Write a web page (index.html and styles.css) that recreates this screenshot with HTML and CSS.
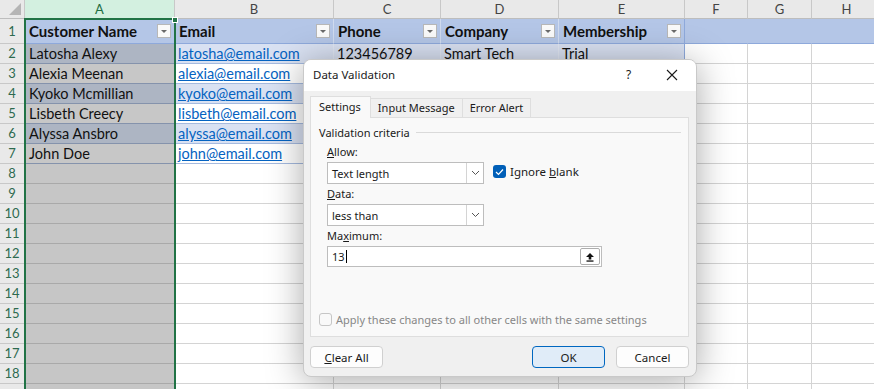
FILE: index.html
```html
<!DOCTYPE html>
<html lang="en">
<head>
  <meta charset="UTF-8" />
  <title>Data Validation</title>
  <link rel="stylesheet" href="styles.css">
</head>
<body>

  <div class="sheet">
    <div class="row colhead">
      <div class="corner"><svg width="14" height="14" viewBox="0 0 14 14"><polygon points="13,1 13,13 1,13" fill="#b5b5b5"/></svg></div>
      <div class="ch on">A</div><div class="ch">B</div><div class="ch">C</div><div class="ch">D</div>
      <div class="ch">E</div><div class="ch">F</div><div class="ch">G</div><div class="ch">H</div>
    </div>

    <div class="row r1">
      <div class="rh">1</div>
      <div class="th">Customer Name<span class="dd"></span></div>
      <div class="th">Email<span class="dd"></span></div>
      <div class="th">Phone<span class="dd"></span></div>
      <div class="th">Company<span class="dd"></span></div>
      <div class="th last">Membership<span class="dd"></span></div>
      <div class="hx"></div><div class="hx"></div><div class="hx"></div>
    </div>

    <div class="row tr band">
      <div class="rh">2</div>
      <div class="sel">Latosha Alexy</div><div><a>latosha@email.com</a></div>
      <div>123456789</div><div>Smart Tech</div><div class="last">Trial</div>
      <div class="g"></div><div class="g"></div><div class="g"></div>
    </div>
    <div class="row tr">
      <div class="rh">3</div>
      <div class="sel">Alexia Meenan</div><div><a>alexia@email.com</a></div>
      <div></div><div></div><div class="last"></div>
      <div class="g"></div><div class="g"></div><div class="g"></div>
    </div>
    <div class="row tr band">
      <div class="rh">4</div>
      <div class="sel">Kyoko Mcmillian</div><div><a>kyoko@email.com</a></div>
      <div></div><div></div><div class="last"></div>
      <div class="g"></div><div class="g"></div><div class="g"></div>
    </div>
    <div class="row tr">
      <div class="rh">5</div>
      <div class="sel">Lisbeth Creecy</div><div><a>lisbeth@email.com</a></div>
      <div></div><div></div><div class="last"></div>
      <div class="g"></div><div class="g"></div><div class="g"></div>
    </div>
    <div class="row tr band">
      <div class="rh">6</div>
      <div class="sel">Alyssa Ansbro</div><div><a>alyssa@email.com</a></div>
      <div></div><div></div><div class="last"></div>
      <div class="g"></div><div class="g"></div><div class="g"></div>
    </div>
    <div class="row tr">
      <div class="rh">7</div>
      <div class="sel">John Doe</div><div><a>john@email.com</a></div>
      <div></div><div></div><div class="last"></div>
      <div class="g"></div><div class="g"></div><div class="g"></div>
    </div>

    <div class="row"><div class="rh">8</div><div class="sel"></div><div></div><div></div><div></div><div></div><div></div><div></div><div></div></div>
    <div class="row"><div class="rh">9</div><div class="sel"></div><div></div><div></div><div></div><div></div><div></div><div></div><div></div></div>
    <div class="row"><div class="rh">10</div><div class="sel"></div><div></div><div></div><div></div><div></div><div></div><div></div><div></div></div>
    <div class="row"><div class="rh">11</div><div class="sel"></div><div></div><div></div><div></div><div></div><div></div><div></div><div></div></div>
    <div class="row"><div class="rh">12</div><div class="sel"></div><div></div><div></div><div></div><div></div><div></div><div></div><div></div></div>
    <div class="row"><div class="rh">13</div><div class="sel"></div><div></div><div></div><div></div><div></div><div></div><div></div><div></div></div>
    <div class="row"><div class="rh">14</div><div class="sel"></div><div></div><div></div><div></div><div></div><div></div><div></div><div></div></div>
    <div class="row"><div class="rh">15</div><div class="sel"></div><div></div><div></div><div></div><div></div><div></div><div></div><div></div></div>
    <div class="row"><div class="rh">16</div><div class="sel"></div><div></div><div></div><div></div><div></div><div></div><div></div><div></div></div>
    <div class="row"><div class="rh">17</div><div class="sel"></div><div></div><div></div><div></div><div></div><div></div><div></div><div></div></div>
    <div class="row"><div class="rh">18</div><div class="sel"></div><div></div><div></div><div></div><div></div><div></div><div></div><div></div></div>
    <div class="row"><div class="rh"></div><div class="sel"></div><div></div><div></div><div></div><div></div><div></div><div></div><div></div></div>

    <div class="selection"><span class="handle"></span></div>
  </div>

  <div class="dialog">
    <div class="titlebar">
      <span class="title">Data Validation</span>
      <span class="help">?</span>
      <span class="close"><svg width="12" height="12" viewBox="0 0 12 12"><path d="M1 1 L11 11 M11 1 L1 11" stroke="#1a1a1a" stroke-width="1.1"/></svg></span>
    </div>

    <div class="dbody">
      <div class="tabs">
        <div class="tab on">Settings</div>
        <div class="tab">Input Message</div>
        <div class="tab">Error Alert</div>
      </div>

      <div class="panel">
        <div class="group"><span>Validation criteria</span><span class="rule"></span></div>

        <div class="fields">
          <div class="label"><u>A</u>llow:</div>
          <div class="line">
            <div class="combo">
              <span class="val">Text length</span>
              <span class="arrow"><svg width="9" height="6" viewBox="0 0 9 6"><path d="M1 1 L4.5 4.5 L8 1" fill="none" stroke="#555" stroke-width="1"/></svg></span>
            </div>
            <div class="check">
              <span class="box on"><svg width="9" height="8" viewBox="0 0 9 8"><path d="M1 4 L3.5 6.5 L8 1.5" fill="none" stroke="#fff" stroke-width="1.2"/></svg></span>
              <span>Ignore <u>b</u>lank</span>
            </div>
          </div>

          <div class="label"><u>D</u>ata:</div>
          <div class="combo">
            <span class="val">less than</span>
            <span class="arrow"><svg width="9" height="6" viewBox="0 0 9 6"><path d="M1 1 L4.5 4.5 L8 1" fill="none" stroke="#555" stroke-width="1"/></svg></span>
          </div>

          <div class="label">Ma<u>x</u>imum:</div>
          <div class="input">
            <span class="val">13<span class="caret"></span></span>
            <span class="pick"><svg width="10" height="10" viewBox="0 0 10 10"><path d="M5 1 L9 5 L6.3 5 L6.3 7.5 L3.7 7.5 L3.7 5 L1 5 Z" fill="#111"/><rect x="1.5" y="8.4" width="7" height="1.3" fill="#111"/></svg></span>
          </div>
        </div>

        <div class="apply"><span class="box off"></span><span>Apply these changes to all other cells with the same settings</span></div>
      </div>

      <div class="buttons">
        <button><u>C</u>lear All</button>
        <span class="spacer"></span>
        <button class="primary">OK</button>
        <button>Cancel</button>
      </div>
    </div>
  </div>

</body>
</html>
```

FILE: styles.css
```css
* {
  box-sizing: border-box;
}

body {
  margin: 0;
  width: 874px;
  height: 389px;
  overflow: hidden;
  background: #fff;
  font-family: Lato, "Liberation Sans", sans-serif;
  color: #111;
}

.sheet {
  position: relative;
  height: 389px;
  overflow: hidden;
}

.row {
  display: grid;
  grid-template-columns: 25px 150px 159px 107px 118px 126px 63px 64px 70px;
  height: 20px;
}

.row > div {
  border-right: 1px solid #d4d4d4;
  border-bottom: 1px solid #d4d4d4;
  font-size: 14.5px;
  line-height: 19px;
  padding: 0 3px;
  white-space: nowrap;
  overflow: hidden;
}

/* column letters */
.colhead {
  height: 19px;
}

.colhead > div {
  background: #e9e9e9;
  border-right-color: #c8c8c8;
  border-bottom-color: #bdbdbd;
  text-align: center;
  font-size: 13px;
  line-height: 18px;
  color: #444;
}

.colhead .corner {
  padding: 2px 0 0 8px;
  text-align: left;
}

.colhead .ch.on {
  background: #d3f0e0;
  color: #1d6d42;
}

/* row numbers */
.row > .rh {
  background: #e9e9e9;
  border-right-color: #bdbdbd;
  border-bottom-color: #c8c8c8;
  color: #2d6a4f;
  font-size: 13px;
  text-align: center;
  padding: 0;
}

/* table header row */
.r1 {
  height: 25px;
}

.r1 > div {
  line-height: 24px;
}

.r1 > .th {
  display: flex;
  align-items: center;
  justify-content: space-between;
  background: #b4c6e7;
  border-right-color: #d0dbef;
  border-bottom-color: #8ea9db;
  font-weight: bold;
  font-size: 15px;
  padding: 0 3px 0 4px;
}

.r1 > .th.last {
  border-right-color: #8ea9db;
}

.r1 > .hx {
  background: #b4c6e7;
  border-right-color: #b4c6e7;
  border-bottom-color: #8ea9db;
}

.dd {
  width: 14px;
  height: 14px;
  background: #fafafa;
  border: 1px solid #b8b8b8;
  position: relative;
}

.dd::after {
  content: "";
  position: absolute;
  left: 3px;
  top: 5px;
  border-left: 3.5px solid transparent;
  border-right: 3.5px solid transparent;
  border-top: 3.5px solid #6a6a6a;
}

/* table body */
.tr > div {
  border-bottom-color: #a5badf;
  border-right-color: #e2e8f4;
}

.tr > div.last {
  border-right-color: #8ea9db;
}

.tr.band > div {
  background: #d9e1f2;
}

.tr > div.g {
  background: #fff;
  border-right-color: #d4d4d4;
  border-bottom-color: #d4d4d4;
}

.tr > .rh,
.tr.band > .rh {
  background: #e9e9e9;
  border-right-color: #bdbdbd;
  border-bottom-color: #c8c8c8;
}

.row > .sel {
  background: #c6c6c6;
  border-bottom-color: #a9a9a9;
  padding-left: 4px;
}

.tr > .sel {
  background: #c7c7c7;
  border-bottom-color: #8593ac;
}

.tr.band > .sel {
  background: #adb5c3;
}

a {
  color: #0563c1;
  text-decoration: underline;
}

.selection {
  position: absolute;
  left: 24px;
  top: 18px;
  width: 152px;
  height: 380px;
  border: 2px solid #217346;
}

.handle {
  position: absolute;
  right: -4px;
  top: -3px;
  width: 6px;
  height: 6px;
  background: #217346;
  border: 1px solid #fff;
}

/* dialog */
.dialog {
  position: absolute;
  left: 303px;
  top: 59px;
  width: 394px;
  height: 318px;
  background: #f0f0f0;
  border: 1px solid #c9c9c9;
  border-radius: 8px;
  box-shadow: 0 4px 36px rgba(0, 0, 0, 0.34);
  font-family: "Noto Sans", "Open Sans", sans-serif;
  font-size: 11px;
  color: #1a1a1a;
  display: flex;
  flex-direction: column;
  overflow: hidden;
}

.titlebar {
  display: flex;
  align-items: center;
  height: 31px;
  background: #fff;
  padding: 0 0 0 9px;
}

.title {
  flex: 1;
  font-size: 11.5px;
  padding-bottom: 2px;
}

.help {
  width: 14px;
  margin-right: 26px;
  font-size: 12px;
  padding-bottom: 2px;
}

.close {
  width: 30px;
  padding-top: 1px;
}

.dbody {
  flex: 1;
  display: flex;
  flex-direction: column;
  padding: 5px 7px 0 6px;
}

.tabs {
  display: flex;
  align-items: flex-end;
  height: 21px;
  position: relative;
  z-index: 1;
}

.tab {
  height: 19px;
  line-height: 17px;
  padding: 0 7px;
  border: 1px solid #dedede;
  border-bottom: none;
  border-left: none;
  background: #f0f0f0;
}

.tab.on {
  height: 22px;
  margin-bottom: -1px;
  line-height: 19px;
  border-left: 1px solid #dedede;
  background: #f9f9f9;
  padding: 0 9px 0 8px;
}

.panel {
  height: 220px;
  background: #f9f9f9;
  border: 1px solid #dedede;
  padding: 6px 7px 0 8px;
  display: flex;
  flex-direction: column;
}

.group {
  display: flex;
  align-items: center;
  height: 16px;
}

.group .rule {
  flex: 1;
  border-top: 1px solid #dadada;
  margin-left: 6px;
}

.fields {
  padding-left: 8px;
  padding-top: 4px;
}

.label {
  height: 16px;
  line-height: 16px;
  margin-bottom: 2px;
}

.line {
  display: flex;
  align-items: flex-start;
}

.combo,
.input {
  display: flex;
  align-items: center;
  width: 157px;
  height: 22px;
  background: #fff;
  border: 1px solid #bdbdbd;
  margin-bottom: 2px;
}

.val {
  flex: 1;
  padding-left: 4px;
  font-size: 11px;
}

.arrow {
  width: 17px;
  height: 20px;
  border-left: 1px solid #d4d4d4;
  display: flex;
  align-items: center;
  justify-content: center;
}

.check {
  display: flex;
  align-items: center;
  margin: 2px 0 0 9px;
  font-size: 11.5px;
}

.box {
  width: 13px;
  height: 13px;
  border-radius: 3px;
  margin-right: 4px;
  display: inline-flex;
  align-items: center;
  justify-content: center;
}

.box.on {
  background: #005fb8;
}

.box.off {
  background: #f9f9f9;
  border: 1px solid #c6c6c6;
}

.input {
  width: 275px;
  height: 21px;
}

.caret {
  display: inline-block;
  width: 1px;
  height: 13px;
  background: #000;
  vertical-align: -2px;
  margin-left: 1px;
}

.pick {
  width: 20px;
  height: 17px;
  margin-right: 1px;
  border: 1px solid #adadad;
  border-radius: 2px;
  display: flex;
  align-items: center;
  justify-content: center;
}

.apply {
  margin-top: auto;
  margin-bottom: 9px;
  display: flex;
  align-items: center;
  color: #878787;
  font-size: 11px;
}

.buttons {
  display: flex;
  gap: 11px;
  padding-top: 9px;
}

.spacer {
  flex: 1;
}

button {
  width: 73px;
  height: 22px;
  font-family: inherit;
  font-size: 11.5px;
  color: #1a1a1a;
  background: #fdfdfd;
  border: 1px solid #d0d0d0;
  border-radius: 4px;
  padding: 0;
}

button.primary {
  background: #e0ecf8;
  border-color: #0067c0;
}
```
